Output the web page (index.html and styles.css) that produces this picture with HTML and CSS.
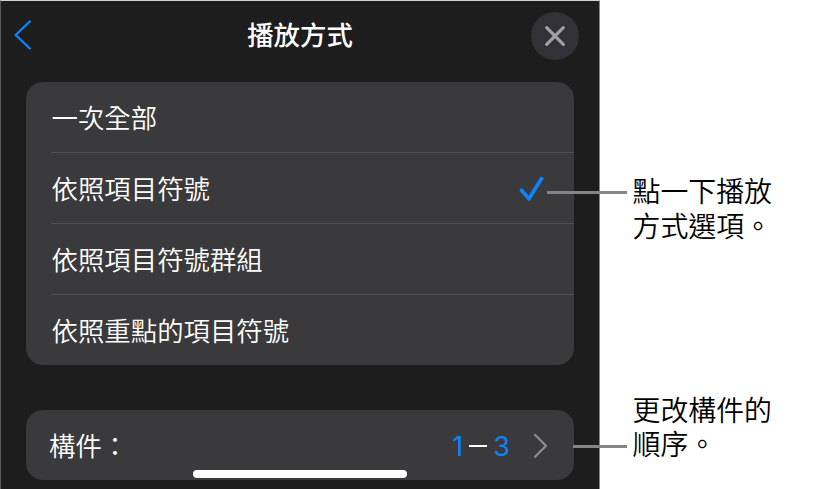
FILE: index.html
```html
<!DOCTYPE html>
<html lang="zh-Hant">
<head>
<meta charset="utf-8">
<title>播放方式</title>
<link rel="stylesheet" href="styles.css">
</head>
<body>
<div class="figure">
  <main class="panel">
    <header class="bar">
      <svg class="back" width="20" height="32" viewBox="0 0 20 32"><path d="M16.8 1.5 2.6 15l14.2 13.5"/></svg>
      <h1 class="title">播放方式</h1>
      <span class="close"><svg width="22" height="22" viewBox="0 0 22 22"><path d="M2.7 2.7l16.6 16.6M19.3 2.7L2.7 19.3"/></svg></span>
    </header>
    <ul class="card options">
      <li class="row">一次全部</li>
      <li class="row">依照項目符號
        <svg class="check" width="26" height="26" viewBox="0 0 26 26"><path d="M2.5 14.3l7.5 8.5L22.6 2.6"/></svg>
      </li>
      <li class="row">依照項目符號群組</li>
      <li class="row">依照重點的項目符號</li>
    </ul>
    <div class="card build">
      <span class="build-label">構件：</span>
      <span class="range"><span>1</span><i class="dash"></i><span>3</span></span>
      <svg class="next" width="16" height="26" viewBox="0 0 16 26"><path d="M3 2.8 14 13.8 3 24.8"/></svg>
    </div>
    <div class="home"></div>
  </main>
  <aside class="notes">
    <p class="note">點一下播放<br>方式選項。</p>
    <p class="note">更改構件的<br>順序。</p>
  </aside>
  <div class="leader leader-option"></div>
  <div class="leader leader-build"></div>
</div>
</body>
</html>
```

FILE: styles.css
```css
* { box-sizing: border-box; }
body {
  margin: 0;
  background: #fff;
  font-family: "Noto Sans CJK TC", sans-serif;
  overflow: hidden;
}
svg {
  display: block;
  fill: none;
  stroke-linecap: round;
  stroke-linejoin: round;
}
.figure {
  position: relative;
  display: flex;
  width: 825px;
  height: 489px;
}
.panel {
  position: relative;
  width: 600px;
  height: 489px;
  padding: 0 25px;
  background: #1d1d1e;
  border: 1px solid #58595b;
  border-top-color: #cfd2d1;
  border-right-color: #858788;
  border-bottom: 0;
  color: #fff;
}
.bar {
  display: grid;
  grid-template-columns: 48px 1fr 48px;
  align-items: center;
  height: 70px;
  margin: 0 -5px 11px -13px;
}
.back { stroke: #0a84ff; stroke-width: 2.4; }
.title {
  margin: 0;
  padding: 0 0 4px 8px;
  text-align: center;
  font-size: 26.4px;
  font-weight: 500;
  line-height: 40px;
}
.close {
  display: grid;
  place-items: center;
  width: 48px;
  height: 48px;
  border-radius: 50%;
  background: #323236;
}
.close svg { stroke: #a0a0a8; stroke-width: 3.2; }
.card {
  margin: 0;
  border-radius: 17px;
  background: #3a3a3c;
}
.options {
  height: 283px;
  padding: 0 0 0 25px;
  list-style: none;
}
.row {
  display: flex;
  align-items: center;
  justify-content: space-between;
  height: 71px;
  padding: 0 29px 1px 0.6px;
  border-bottom: 1px solid #505052;
  font-size: 26.4px;
  font-weight: 350;
  line-height: 40px;
}
.row:last-child { height: 70px; border-bottom: 0; }
.check { stroke: #0a84ff; stroke-width: 3.7; position: relative; top: 1px; }
.build {
  display: flex;
  align-items: center;
  height: 70px;
  margin-top: 45px;
  padding: 0 26px 0 23px;
  font-size: 26.4px;
  font-weight: 350;
}
.build-label { flex: 1; padding-bottom: 2px; }
.range {
  display: flex;
  align-items: center;
  gap: 6px;
  margin-right: 22px;
  color: #0a84ff;
  font-family: Inter, sans-serif;
  font-size: 27px;
  font-weight: 400;
  padding-top: 2px;
}
.dash {
  width: 18px;
  height: 2px;
  margin-top: -1px;
  background: #fff;
}
.next { stroke: #8d8d91; stroke-width: 2.2; }
.home {
  position: absolute;
  left: 192px;
  top: 469px;
  width: 214px;
  height: 8px;
  border-radius: 4px;
  background: #fff;
}
.notes {
  display: flex;
  flex-direction: column;
  gap: 149px;
  padding: 173px 0 0 32.5px;
}
.note {
  margin: 0;
  color: #000;
  font-size: 27.9px;
  font-weight: 350;
  line-height: 34.8px;
}
.leader {
  position: absolute;
  height: 3px;
  background: #858585;
}
.leader-option { left: 547px; top: 191px; width: 80px; }
.leader-build { left: 573px; top: 445px; width: 54px; }
```
